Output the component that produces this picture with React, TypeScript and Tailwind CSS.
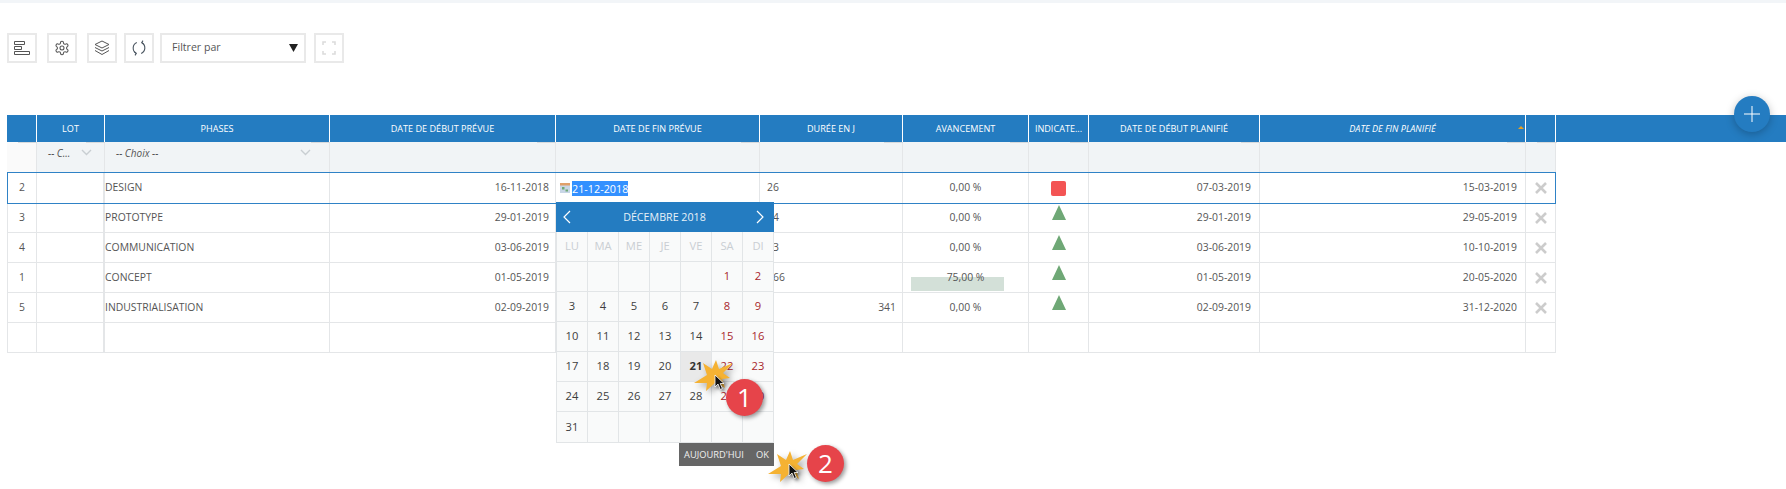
import React from "react";

const cols = "grid grid-cols-[30px_68px_225px_226px_204px_143px_126px_60px_171px_266px_30px]";
const headers = ["", "LOT", "PHASES", "DATE DE DÉBUT PRÉVUE", "DATE DE FIN PRÉVUE", "DURÉE EN J", "AVANCEMENT", "INDICATE...", "DATE DE DÉBUT PLANIFIÉ", "DATE DE FIN PLANIFIÉ", ""];
const rows = [
  { id: "2", phase: "DESIGN", start: "16-11-2018", dur: "26", pct: "0,00 %", ind: "red", ps: "07-03-2019", pe: "15-03-2019" },
  { id: "3", phase: "PROTOTYPE", start: "29-01-2019", dur: "14", pct: "0,00 %", ind: "green", ps: "29-01-2019", pe: "29-05-2019" },
  { id: "4", phase: "COMMUNICATION", start: "03-06-2019", dur: "13", pct: "0,00 %", ind: "green", ps: "03-06-2019", pe: "10-10-2019" },
  { id: "1", phase: "CONCEPT", start: "01-05-2019", dur: "366", pct: "75,00 %", ind: "green", ps: "01-05-2019", pe: "20-05-2020" },
  { id: "5", phase: "INDUSTRIALISATION", start: "02-09-2019", dur: "341", pct: "0,00 %", ind: "green", ps: "02-09-2019", pe: "31-12-2020" },
];

function IconBtn({ children }: { children: React.ReactNode }) {
  return <div className="flex h-[30px] w-[30px] items-center justify-center border-2 border-[#e9e9e9] bg-white">{children}</div>;
}

function Chevron({ className }: { className: string }) {
  return (
    <svg className={className} width="11" height="7" viewBox="0 0 11 7" fill="none" stroke="#c9ced2" strokeWidth="1.4">
      <path d="M1 1l4.5 4.5L10 1" />
    </svg>
  );
}

function Star({ className }: { className: string }) {
  return (
    <svg className={className} width="40" height="32" viewBox="0 0 40 32" style={{ filter: "drop-shadow(3px 3px 3px rgba(0,0,0,.35))" }}>
      <path fill="#f5b233" d="M0 23L13 15 9 3l9 6 4-9 3 9 14-6-10 10 7 5-8 1 3 9-9-6-10 9 1-8z" />
    </svg>
  );
}

function Cursor({ className }: { className: string }) {
  return (
    <svg className={className} width="12" height="17" viewBox="0 0 12 17" style={{ filter: "drop-shadow(2px 2px 1.5px rgba(0,0,0,.45))" }}>
      <path fill="#111" stroke="#fff" strokeWidth="0.8" d="M1 1v12l3-3 2.2 5.5 2.2-1-2.2-5H10z" />
    </svg>
  );
}

function Badge({ n, className }: { n: string; className: string }) {
  return (
    <div className={`absolute flex h-[37px] w-[37px] items-center justify-center rounded-full bg-[#e6444a] text-[26px] text-white shadow-[2px_2px_4px_rgba(0,0,0,.4)] ${className}`}>
      {n}
    </div>
  );
}

function Calendar() {
  const cells: (number | null)[] = [null, null, null, null, null, 1, 2];
  for (let d = 3; d <= 31; d++) cells.push(d);
  while (cells.length % 7 !== 0) cells.push(null);
  return (
    <div className="absolute left-[556px] top-[202px] w-[218px]">
      <div className="flex h-[30px] items-center justify-between bg-[#247cc1] pl-[6px] pr-[9px] text-[10.7px] text-[#e8f1f8]">
        <svg width="10" height="14" viewBox="0 0 10 14" fill="none" stroke="#fff" strokeWidth="1.2"><path d="M8 1L2 7l6 6" /></svg>
        <span className="pl-[2px]">DÉCEMBRE 2018</span>
        <svg width="10" height="14" viewBox="0 0 10 14" fill="none" stroke="#fff" strokeWidth="1.2"><path d="M2 1l6 6-6 6" /></svg>
      </div>
      <div className="grid grid-cols-[repeat(7,31px)] border-b border-l border-[#e2e5e7] bg-[#f9fafa] text-[11.2px]">
        {["LU", "MA", "ME", "JE", "VE", "SA", "DI"].map((d) => (
          <div key={d} className="flex h-[30px] items-center justify-center border-r border-b border-[#e2e5e7] text-[#c9ced3]">{d}</div>
        ))}
        {cells.map((d, i) => {
          const we = i % 7 >= 5;
          const sel = d === 21;
          return (
            <div
              key={i}
              className={`flex h-[30px] items-center justify-center ${i < 35 ? "border-b" : ""} border-r border-[#e2e5e7] ${sel ? "bg-[#e9e9e9] font-bold text-[#333]" : we ? "text-[#a8262c]" : "text-[#3d3d3d]"}`}
            >
              {d}
            </div>
          );
        })}
      </div>
      <div className="flex justify-end">
        <div className="flex h-[23px] w-[95px] items-center justify-between bg-[#666] pl-[5px] pr-[5px] text-[9.3px] text-[#f0f0f0]">
          <span>AUJOURD'HUI</span>
          <span>OK</span>
        </div>
      </div>
    </div>
  );
}

export default function App() {
  const line = "border-[#e4e6e8]";
  return (
    <div className="relative h-[489px] w-[1786px] overflow-hidden bg-white text-[#555] [font-family:'Open_Sans',sans-serif]">
      <div className="h-[3px] bg-[#f2f5f8]" />

      <div className="ml-[7px] mt-[30px] flex h-[30px]">
        <IconBtn>
          <svg width="16" height="16" viewBox="0 0 16 16" fill="none" stroke="#555" strokeWidth="1">
            <path d="M.5 1.500h10v3H.5zM.5 6.500h7v3h-7zM.5 11.500h15v3H.5z" />
          </svg>
        </IconBtn>
        <div className="ml-[10px]">
          <IconBtn>
            <svg width="16" height="16" viewBox="0 0 24 24" fill="none" stroke="#555" strokeWidth="1.6" strokeLinejoin="round">
              <path d="M12.22 2h-.44a2 2 0 0 0-2 2v.18a2 2 0 0 1-1 1.73l-.43.25a2 2 0 0 1-2 0l-.15-.08a2 2 0 0 0-2.73.73l-.22.38a2 2 0 0 0 .73 2.73l.15.1a2 2 0 0 1 1 1.72v.51a2 2 0 0 1-1 1.74l-.15.09a2 2 0 0 0-.73 2.73l.22.38a2 2 0 0 0 2.73.73l.15-.08a2 2 0 0 1 2 0l.43.25a2 2 0 0 1 1 1.73V20a2 2 0 0 0 2 2h.44a2 2 0 0 0 2-2v-.18a2 2 0 0 1 1-1.73l.43-.25a2 2 0 0 1 2 0l.15.08a2 2 0 0 0 2.73-.73l.22-.39a2 2 0 0 0-.73-2.73l-.15-.08a2 2 0 0 1-1-1.74v-.5a2 2 0 0 1 1-1.74l.15-.09a2 2 0 0 0 .73-2.73l-.22-.38a2 2 0 0 0-2.73-.73l-.15.08a2 2 0 0 1-2 0l-.43-.25a2 2 0 0 1-1-1.73V4a2 2 0 0 0-2-2z" />
              <circle cx="12" cy="12" r="3" />
            </svg>
          </IconBtn>
        </div>
        <div className="ml-[10px]">
          <IconBtn>
            <svg width="16" height="16" viewBox="0 0 16 16" fill="none" stroke="#555" strokeWidth="1">
              <path d="M8 1l7 3.500L8 8 1 4.500zM1 7.500L8 11l7-3.500M1 10.500L8 14.500l7-4" strokeLinejoin="round" />
            </svg>
          </IconBtn>
        </div>
        <div className="ml-[7px]">
          <IconBtn>
            <svg width="16" height="16" viewBox="0 0 16 16" fill="none" stroke="#4a5560" strokeWidth="1.1">
              <path d="M5.800 2.600A6 6 0 0 0 5 13.200" />
              <path d="M3.200 11.600L5.300 13.400 4 15.400" />
              <path d="M10.200 13.400A6 6 0 0 0 11 2.800" />
              <path d="M12.800 4.400L10.700 2.600 12 .6" />
            </svg>
          </IconBtn>
        </div>
        <div className="ml-[6px] flex h-[30px] w-[146px] items-center justify-between border-2 border-[#e9e9e9] pl-[10px] pr-[6px] text-[10.6px]">
          <span>Filtrer par</span>
          <svg width="9" height="8" viewBox="0 0 9 8"><path d="M0 0h9L4.500 8z" fill="#222" /></svg>
        </div>
        <div className="ml-[8px]">
          <IconBtn>
            <svg width="14" height="14" viewBox="0 0 14 14" fill="none" stroke="#dcdcdc" strokeWidth="1.6">
              <path d="M1 4V1h3M10 1h3v3M13 10v3h-3M4 13H1v-3" />
            </svg>
          </IconBtn>
        </div>
      </div>

      <div className="ml-[7px] mt-[52px]">
        {/* header */}
        <div className="flex h-[27px] bg-[#247cc1]">
          <div className={cols}>
            {headers.map((h, i) => (
              <div
                key={i}
                className={`relative flex items-center justify-center border-r border-white text-[9.1px] text-white ${i === 9 ? "italic" : ""}`}
              >
                {h}
                {i === 9 && <span className="absolute right-[1px] top-[11px] h-0 w-0 border-x-[3px] border-b-[3px] border-x-transparent border-b-[#e8a020]" />}
              </div>
            ))}
          </div>
        </div>

        {/* filters */}
        <div className={`${cols} h-[30px] w-fit`}>
          {headers.map((_, i) => (
            <div key={i} className={`relative flex items-center border-r ${line} pb-[8px] italic text-[10px] text-[#555] ${i === 0 ? "bg-[#fafafa]" : "bg-[#f1f4f6]"}`}>
              {i === 1 && <span className="pl-[11px]">-- C...</span>}
              {i === 1 && <Chevron className="absolute right-[12px] top-[7px]" />}
              {i === 2 && <span className="pl-[11px]">-- Choix --</span>}
              {i === 2 && <Chevron className="absolute right-[18px] top-[7px]" />}
              <span className="absolute -right-[2px] top-0 h-px w-[20px] bg-[#d8dadc]" />
            </div>
          ))}
        </div>

        {/* rows */}
        {rows.map((r, idx) => (
          <div
            key={r.id}
            className={`${cols} w-fit text-[10.4px] text-[#555] ${idx === 0 ? "h-[32px] border-y border-[#2f82c6]" : idx === 1 ? `h-[29px] border-b ${line}` : `h-[30px] border-b ${line}`}`}
          >
            <div className={`flex items-center justify-center border-r ${line} ${idx === 0 ? "border-l border-l-[#2f82c6]" : `border-l ${line}`}`}>{r.id}</div>
            <div className={`border-r-2 ${line}`} />
            <div className={`flex items-center border-r ${line}`}>{r.phase}</div>
            <div className={`flex items-center justify-end border-r ${line} pr-[6px]`}>{r.start}</div>
            <div className={`flex items-center border-r ${line} pl-[4px]`}>
              {idx === 0 && (
                <>
                  <svg width="10" height="10" viewBox="0 0 10 10" className="mr-[2px] shrink-0">
                    <rect width="10" height="10" fill="#c8d6e6" />
                    <rect y="0" width="10" height="2.500" fill="#e0a06a" />
                    <rect x="2" y="4" width="2.500" height="2.500" fill="#6fa876" />
                    <rect x="5.500" y="6.500" width="2.500" height="2" fill="#6fa876" />
                  </svg>
                  <span className="bg-[#3390ff] py-px text-[10.8px] leading-[13px] text-white">21-12-2018</span>
                </>
              )}
            </div>
            <div className={`flex items-center border-r ${line} ${idx === 4 ? "justify-end pr-[6px]" : "pl-[7px]"}`}>{r.dur}</div>
            <div className={`relative flex items-center justify-center border-r ${line}`}>
              {r.pct === "75,00 %" && <div className="absolute left-[8px] top-[14px] h-[14px] w-[93px] bg-[#d3e0d8]" />}
              <span className="relative">{r.pct}</span>
            </div>
            <div className={`flex justify-center border-r ${line} ${idx === 1 ? "pt-[1px]" : "pt-[2px]"}`}>
              {r.ind === "red" ? (
                <div className="mt-[6px] h-[15px] w-[15px] rounded-[2px] bg-[#f35454]" />
              ) : (
                <div className="h-0 w-0 border-x-[7.5px] border-b-[15px] border-x-transparent border-b-[#6fa876]" />
              )}
            </div>
            <div className={`flex items-center justify-end border-r ${line} pr-[8px]`}>{r.ps}</div>
            <div className={`flex items-center justify-end border-r ${line} pr-[8px]`}>{r.pe}</div>
            <div className={`flex items-center justify-center border-r ${idx === 0 ? "border-[#2f82c6]" : line}`}>
              <svg width="12" height="12" viewBox="0 0 12 12" stroke="#ccc" strokeWidth="2.6"><path d="M1 1l10 10M11 1L1 11" /></svg>
            </div>
          </div>
        ))}
        <div className={`${cols} h-[30px] w-fit border-b ${line}`}>
          {headers.map((_, i) => (
            <div key={i} className={`${i === 1 ? "border-r-2" : "border-r"} ${line} ${i === 0 ? "border-l" : ""}`} />
          ))}
        </div>
      </div>

      {/* floating action button */}
      <div className="absolute left-[1734px] top-[96px] flex h-[36px] w-[36px] items-center justify-center rounded-full bg-[#247cc1] shadow-[0_2px_8px_rgba(0,0,0,.25)]">
        <svg width="20" height="20" viewBox="0 0 20 20" stroke="#fff" strokeWidth="1"><path d="M10 2v16M2 10h16" /></svg>
      </div>

      <Calendar />

      {/* annotations */}
      <Star className="absolute left-[694px] top-[360px]" />
      <Cursor className="absolute left-[714px] top-[374px]" />
      <Badge n="1" className="left-[726px] top-[379px]" />
      <Star className="absolute left-[768px] top-[451px]" />
      <Cursor className="absolute left-[788px] top-[463px]" />
      <Badge n="2" className="left-[807px] top-[445px]" />
    </div>
  );
}
